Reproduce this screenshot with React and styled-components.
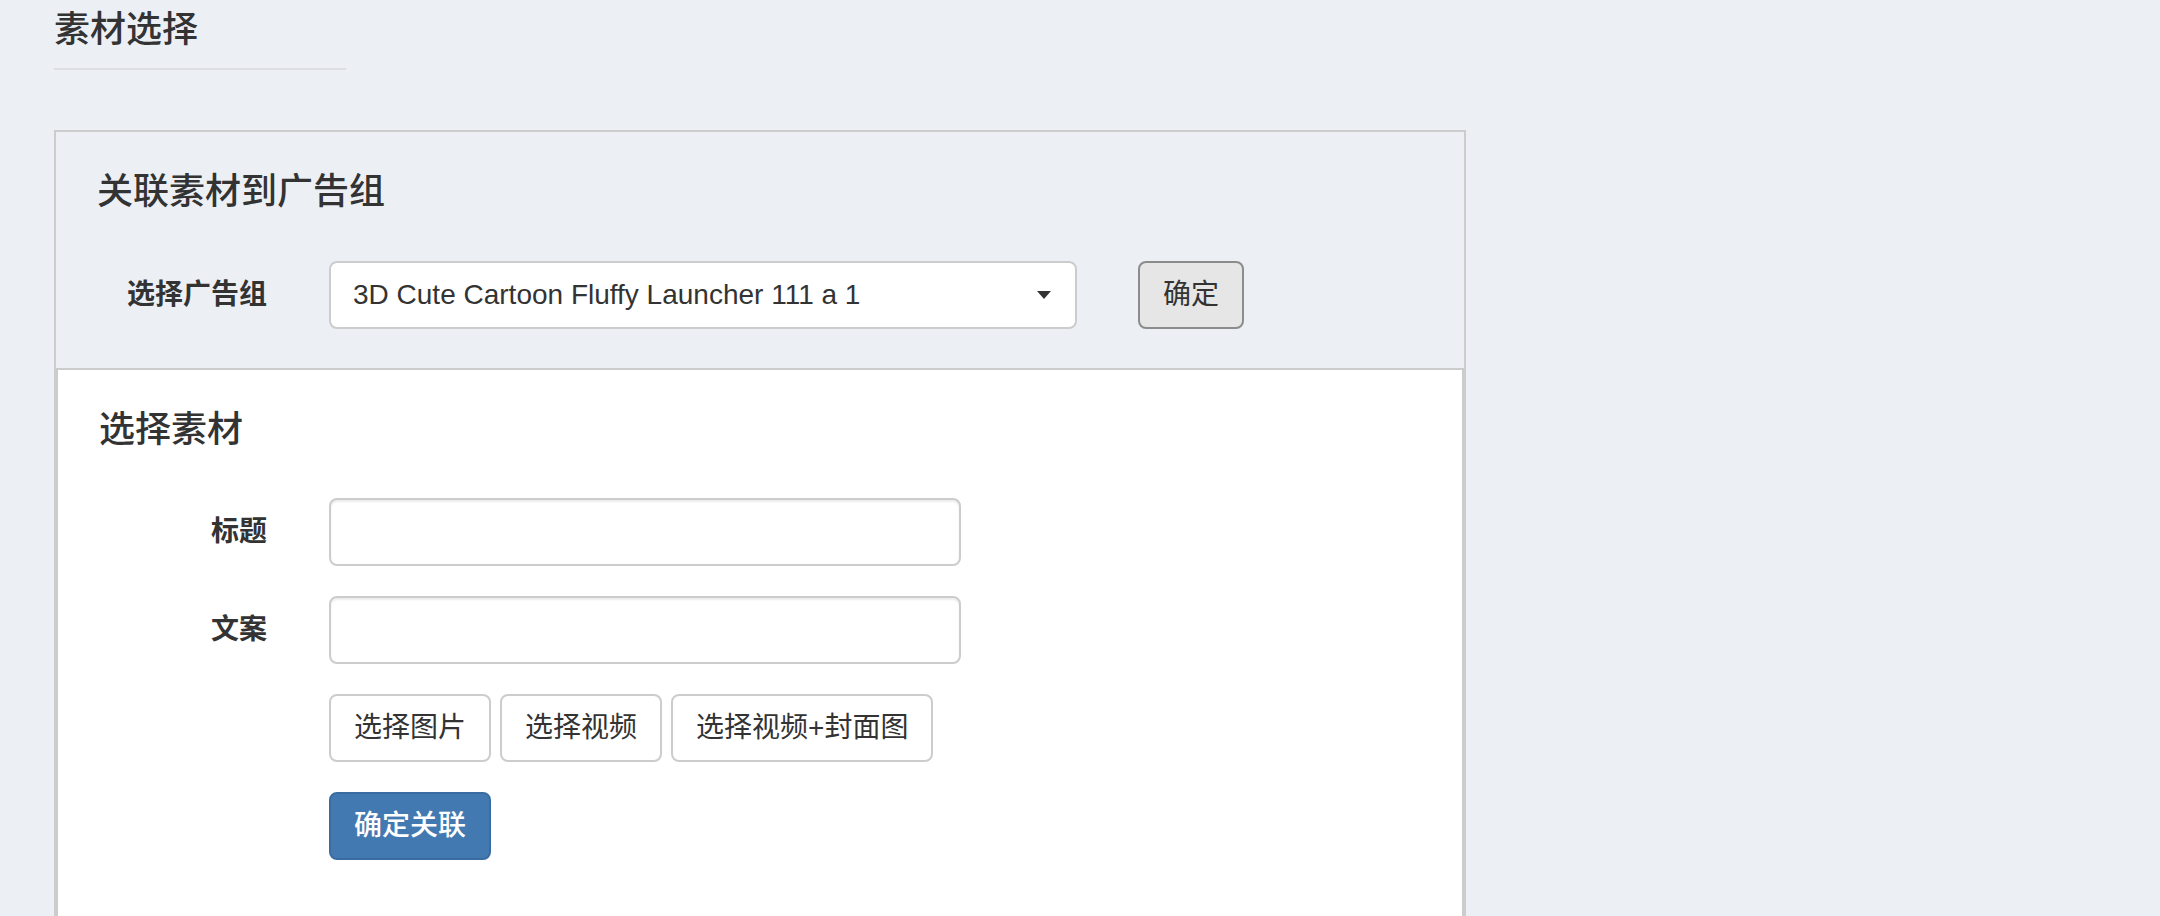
import React from 'react'
import styled, { createGlobalStyle, css } from 'styled-components'

const GlobalStyle = createGlobalStyle`
  * { box-sizing: border-box; }
  html, body {
    margin: 0;
    padding: 0;
    background: #ecf0f5;
    overflow: hidden;
  }
  body {
    font-family: "Liberation Sans", "Noto Sans CJK SC", sans-serif;
    font-size: 28px;
    line-height: 40px;
    color: #333;
  }
`

const Page = styled.div`
  height: 916px;
  padding-left: 54px;
`

const PageTitle = styled.h1`
  width: 292px;
  margin: 0;
  padding: 10px 0 18px;
  font-size: 36px;
  line-height: 40px;
  font-weight: 500;
  border-bottom: 2px solid #dcdee2;
`

const Panel = styled.section`
  width: 1412px;
  margin-top: 60px;
  border: 2px solid #ccc;
  border-bottom: none;
`

const PanelHead = styled.div`
  padding: 40px 41px 39px;
`

const PanelBody = styled.div`
  background: #fff;
  border: 2px solid #ccc;
  border-bottom: none;
  padding: 40px 41px 56px;
`

const SectionTitle = styled.h4`
  margin: 0 0 ${p => p.$space}px;
  font-size: 36px;
  line-height: 40px;
  font-weight: 500;
`

const FormRow = styled.div`
  display: grid;
  grid-template-columns: ${p => p.$labelWidth}px auto;
  column-gap: 62px;
  align-items: center;
  justify-content: start;
  & + & { margin-top: 30px; }
`

const Label = styled.label`
  text-align: right;
  font-weight: 700;
`

const Controls = styled.div`
  display: flex;
  align-items: center;
  gap: ${p => p.$gap}px;
`

const SelectBox = styled.div`
  width: 748px;
  height: 68px;
  display: flex;
  align-items: center;
  justify-content: space-between;
  padding: 0 24px 0 22px;
  background: #fff;
  border: 2px solid #ccc;
  border-radius: 8px;
`

const Caret = styled.span`
  width: 0;
  height: 0;
  border-left: 7px solid transparent;
  border-right: 7px solid transparent;
  border-top: 8px solid #333;
`

const TextInput = styled.input`
  width: 632px;
  height: 68px;
  padding: 0 22px;
  font: inherit;
  color: #555;
  background: #fff;
  border: 2px solid #ccc;
  border-radius: 8px;
  box-shadow: inset 0 2px 2px rgba(0, 0, 0, 0.075);
  outline: none;
`

const variants = {
  default: css`
    background: #fff;
    border-color: #ccc;
    color: #333;
  `,
  active: css`
    background: #e6e6e6;
    border-color: #8c8c8c;
    color: #333;
  `,
  primary: css`
    background: #4379b1;
    border-color: #3b6ca1;
    color: #fff;
    font-weight: 500;
  `,
}

const Button = styled.button`
  height: 68px;
  padding: 0 23px;
  font: inherit;
  line-height: 40px;
  border: 2px solid;
  border-radius: 8px;
  cursor: pointer;
  ${p => variants[p.$variant || 'default']}
`

const App = () => {
  return (
    <>
      <GlobalStyle />
      <Page>
        <PageTitle>素材选择</PageTitle>
        <Panel>
          <PanelHead>
            <SectionTitle $space={49}>关联素材到广告组</SectionTitle>
            <FormRow $labelWidth={170}>
              <Label>选择广告组</Label>
              <Controls $gap={61}>
                <SelectBox>
                  <span>3D Cute Cartoon Fluffy Launcher 111 a 1</span>
                  <Caret />
                </SelectBox>
                <Button $variant="active">确定</Button>
              </Controls>
            </FormRow>
          </PanelHead>
          <PanelBody>
            <SectionTitle $space={48}>选择素材</SectionTitle>
            <FormRow $labelWidth={168}>
              <Label>标题</Label>
              <TextInput />
            </FormRow>
            <FormRow $labelWidth={168}>
              <Label>文案</Label>
              <TextInput />
            </FormRow>
            <FormRow $labelWidth={168}>
              <span />
              <Controls $gap={9}>
                <Button>选择图片</Button>
                <Button>选择视频</Button>
                <Button>选择视频+封面图</Button>
              </Controls>
            </FormRow>
            <FormRow $labelWidth={168}>
              <span />
              <Controls $gap={9}>
                <Button $variant="primary">确定关联</Button>
              </Controls>
            </FormRow>
          </PanelBody>
        </Panel>
      </Page>
    </>
  )
}

export default App
